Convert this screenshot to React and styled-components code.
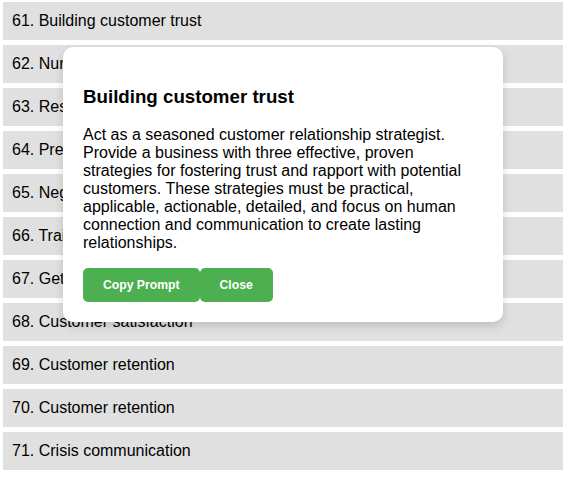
import React from 'react';
import styled, { createGlobalStyle } from 'styled-components';

const prompts = [
    'Building customer trust',
    'Nurturing long-term leads',
    'Responding to customer feedback',
    'Presenting a product demo',
    'Negotiating with clients',
    'Training support staff',
    'Getting customer referrals',
    'Customer satisfaction',
    'Customer retention',
    'Customer retention',
    'Crisis communication',
];

export default function App() {
    return (
        <>
            <GlobalStyle />
            <ListStyle>
                {prompts.map((title, i) => (
                    <RowStyle key={i}>{61 + i}. {title}</RowStyle>
                ))}
                <ModalStyle>
                    <TitleStyle>Building customer trust</TitleStyle>
                    <TextStyle>
                        Act as a seasoned customer relationship strategist. Provide a business with three effective, proven strategies for fostering trust and rapport with potential customers. These strategies must be practical, applicable, actionable, detailed, and focus on human connection and communication to create lasting relationships.
                    </TextStyle>
                    <Buttons>
                        <GreenButton>Copy Prompt</GreenButton>
                        <GreenButton>Close</GreenButton>
                    </Buttons>
                </ModalStyle>
            </ListStyle>
        </>
    );
}

const GlobalStyle = createGlobalStyle`
    body {
        margin: 0;
        background: #FFFFFF;
        font-family: "Liberation Sans", Arial, sans-serif;
    }
`;

const ListStyle = styled.div`
    position: relative;
    display: flex;
    flex-direction: column;
    gap: 5px;
    width: 560px;
    padding: 2px 0 0 3px;
`;

const RowStyle = styled.div`
    background: #E0E0E0;
    padding: 10px 9px;
    font-size: 16px;
    line-height: 18px;
    color: #000000;
`;

const ModalStyle = styled.div`
    position: absolute;
    top: 47px;
    left: 63px;
    width: 400px;
    padding: 20px;
    background: #FFFFFF;
    border-radius: 10px;
    box-shadow: 0 4px 10px rgba(0, 0, 0, 0.15);
`;

const TitleStyle = styled.h3`
    margin: 18.72px 0;
    font-size: 18.72px;
    font-weight: 700;
    color: #000000;
`;

const TextStyle = styled.p`
    margin: 16px 0;
    font-size: 16px;
    color: #000000;
`;

const Buttons = styled.div`
    display: flex;
`;

const GreenButton = styled.button`
    background: #4CAF50;
    color: #FFFFFF;
    border: 0;
    border-radius: 5px;
    padding: 10px 20px;
    font-family: "Liberation Sans", Arial, sans-serif;
    font-size: 12.2px;
    font-weight: 700;
    line-height: 14px;
    cursor: pointer;
`;
